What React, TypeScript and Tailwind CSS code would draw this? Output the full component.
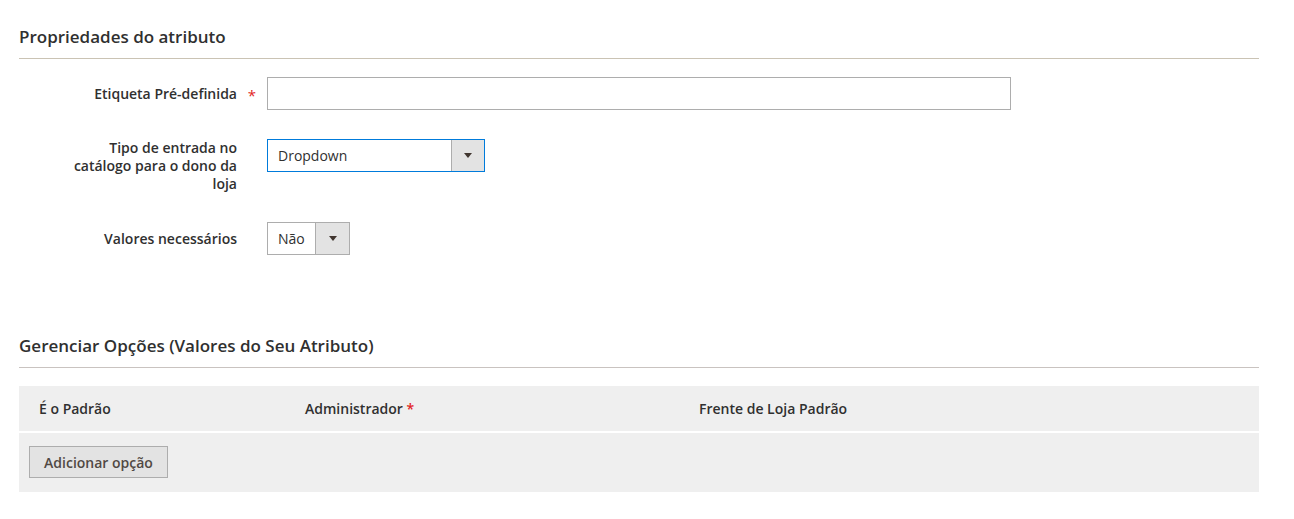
import React from 'react';

const font = { fontFamily: '"Open Sans", "Liberation Sans", sans-serif' };

function Caret() {
  return (
    <svg width="8" height="5" viewBox="0 0 8 5" className="block">
      <path d="M0 0 L8 0 L4 5 Z" fill="#41362f" />
    </svg>
  );
}

interface FieldRowProps {
  label: React.ReactNode;
  required?: boolean;
  labelClass?: string;
  children: React.ReactNode;
}

function FieldRow({ label, required, labelClass = 'pt-[8px]', children }: FieldRowProps) {
  return (
    <div className="flex items-start">
      <div className={`w-[178px] ml-[40px] text-right text-[14px] leading-[18px] font-semibold text-[#303030] ${labelClass}`}>
        {label}
      </div>
      <div className="w-[30px] flex justify-center pt-[9px]">
        {required && <span className="text-[#e22626] text-[15px] leading-[18px]">*</span>}
      </div>
      {children}
    </div>
  );
}

function SelectBox({ value, width, btnWidth, focused }: { value: string; width: string; btnWidth: string; focused?: boolean }) {
  return (
    <div
      className={`flex h-[33px] ${width} border ${focused ? 'border-[#007bdb]' : 'border-[#adadad]'} bg-white`}
    >
      <div className="flex-1 flex items-center pl-[10px] text-[14px] text-[#303030]">{value}</div>
      <div className={`${btnWidth} flex items-center justify-center bg-[#e3e3e3] border-l border-[#adadad]`}>
        <Caret />
      </div>
    </div>
  );
}

export default function App() {
  return (
    <div className="bg-white min-h-[519px] pl-[19px] pt-[25px] pr-[35px]" style={font}>
      <div className="text-[17px] leading-[24px] font-semibold text-[#303030] pb-[9px] border-b border-[#cac3b4]">
        Propriedades do atributo
      </div>

      <div className="mt-[18px] flex flex-col gap-[29px]">
        <FieldRow label="Etiqueta Pré-definida" required>
          <input className="h-[33px] w-[744px] border border-[#adadad] bg-white outline-none px-[10px] text-[14px]" />
        </FieldRow>
        <FieldRow label="Tipo de entrada no catálogo para o dono da loja" labelClass="pt-0">
          <SelectBox value="Dropdown" width="w-[218px]" btnWidth="w-[33px]" focused />
        </FieldRow>
        <FieldRow label="Valores necessários" labelClass="pt-[8px]">
          <SelectBox value="Não" width="w-[83px]" btnWidth="w-[34px]" />
        </FieldRow>
      </div>

      <div className="mt-[79px] text-[17px] leading-[24px] font-semibold text-[#303030] pb-[9px] border-b border-[#c9c3c0]">
        Gerenciar Opções (Valores do Seu Atributo)
      </div>

      <div className="mt-[18px]">
        <div className="flex items-center h-[45px] bg-[#efefef] text-[14px] font-semibold text-[#303030]">
          <div className="w-[266px] pl-[20px]">É o Padrão</div>
          <div className="w-[394px] pl-[20px]">
            Administrador <span className="text-[#e22626]">*</span>
          </div>
          <div className="flex-1 pl-[20px]">Frente de Loja Padrão</div>
        </div>
        <div className="mt-[2px] h-[59px] bg-[#efefef] pt-[13px] pl-[10px]">
          <button className="h-[32px] w-[139px] border border-[#adadad] bg-[#e3e3e3] text-[14px] font-semibold text-[#514943]">
            Adicionar opção
          </button>
        </div>
      </div>
    </div>
  );
}
